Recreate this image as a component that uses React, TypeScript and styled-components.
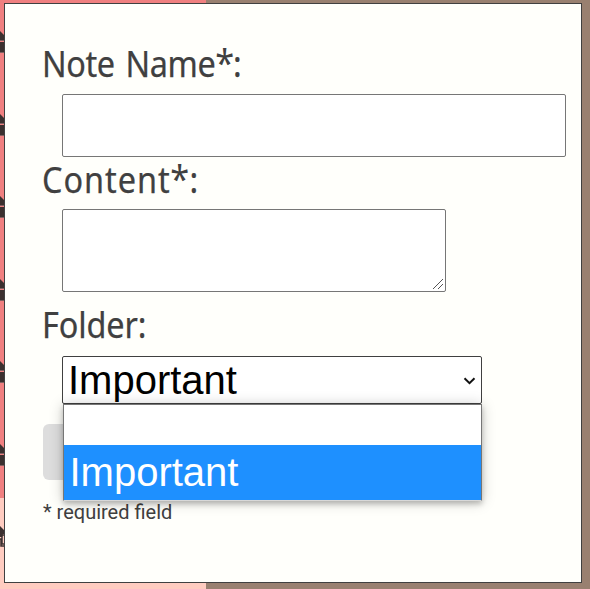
import React from "react";
import styled, { createGlobalStyle } from "styled-components";

const GlobalStyle = createGlobalStyle`
  *, *::before, *::after { box-sizing: border-box; }
  html, body { margin: 0; padding: 0; overflow: hidden; }
`;

const Page = styled.div`
  position: relative;
  display: grid;
  grid-template-columns: 206px 1fr;
  width: 590px;
  height: 589px;
  overflow: hidden;
  background: #998070;
`;

const Sidebar = styled.aside`
  display: grid;
  grid-template-rows: 498px 1fr;
`;

const FolderList = styled.div`
  background: #f08080;
  padding-top: 31px;
`;

const AddFolder = styled.div`
  background: #ffccc0;
  padding-top: 28px;
`;

const IconSlot = styled.div`
  height: 82.6px;
  svg { display: block; }
`;

const Dialog = styled.form`
  position: absolute;
  left: 4px;
  top: 3px;
  width: 578px;
  height: 580px;
  padding: 33px 15px 0 38px;
  border: 1px solid #404040;
  background: #fffffb;
  display: flex;
  flex-direction: column;
  align-items: flex-start;
`;

const Label = styled.label<{ $height: number; $line: number; $tracking: number }>`
  height: ${(p) => p.$height}px;
  margin-left: -1px;
  font-family: "Noto Sans", sans-serif;
  font-size: 36px;
  line-height: ${(p) => p.$line}px;
  letter-spacing: ${(p) => p.$tracking}px;
  word-spacing: 3px;
  white-space: nowrap;
  color: #404040;
  -webkit-text-stroke: 0.25px #404040;
  transform: scaleX(0.9);
  transform-origin: 0 0;
`;

const Star = styled.span`
  display: inline-block;
  line-height: 1;
  -webkit-text-stroke: 0;
  transform: translateY(-1px) scale(1.06);
`;

const NameInput = styled.input`
  width: 504px;
  height: 63px;
  margin: 0 0 0 19px;
  border: 1px solid #767676;
  border-radius: 2px;
  background: #fff;
`;

const ContentWrap = styled.div`
  position: relative;
  width: 384px;
  height: 83px;
  margin: 0 0 10px 19px;
`;

const ContentArea = styled.textarea`
  display: block;
  width: 100%;
  height: 100%;
  border: 1px solid #767676;
  border-radius: 2px;
  background: #fff;
  resize: none;
`;

const Grip = styled.svg`
  position: absolute;
  right: 2px;
  bottom: 2px;
`;

const SelectWrap = styled.div`
  position: relative;
  width: 420px;
  height: 48px;
  margin-left: 19px;
`;

const SelectBox = styled.div`
  display: flex;
  align-items: center;
  justify-content: space-between;
  height: 48px;
  padding: 0 5px;
  border: 1px solid #404040;
  border-radius: 2px;
  background: #fff;
  font: 40px/46px "Liberation Sans", Arial, sans-serif;
  color: #000;
  svg { margin-top: 2px; }
`;

const OptionList = styled.div`
  position: absolute;
  z-index: 1;
  left: 1px;
  top: 48px;
  width: 419px;
  height: 97px;
  border: 1px solid #767676;
  border-bottom-color: #d8d8d8;
  background: #fff;
  box-shadow: 0 1px 13px rgba(0, 0, 0, 0.22), 0 3px 5px rgba(0, 0, 0, 0.2);
`;

const Option = styled.div<{ $selected?: boolean }>`
  height: ${(p) => (p.$selected ? 55 : 40)}px;
  padding-left: 5.5px;
  font: 40px/54px "Liberation Sans", Arial, sans-serif;
  color: #fff;
  background: ${(p) => (p.$selected ? "#1e90ff" : "#fff")};
`;

const SubmitButton = styled.button`
  width: 130px;
  height: 56px;
  margin: 20px 0 0;
  border: 0;
  border-radius: 6px;
  background: #dddddd;
`;

const Footnote = styled.p`
  margin: 20px 0 0;
  font: 20px/24px Roboto, sans-serif;
  white-space: nowrap;
  color: #404040;
`;

const FolderIcon = () => (
  <svg width="5" height="23" viewBox="0 0 5 23">
    <path d="M0 0L5 5V9H0Z" fill="#3b302f" />
    <path d="M0 11H5V21H0Z" fill="#3b302f" />
    <path d="M0 9.5H5M0 21.5H5" stroke="#806060" strokeWidth="1" />
  </svg>
);

const AddFolderIcon = () => (
  <svg width="5" height="23" viewBox="0 0 5 23">
    <path d="M0 0L5 5V8H3L2 11H0Z" fill="#3b302f" />
    <path d="M5 9H2V18H5M0 13H1V20H5" fill="none" stroke="#3b302f" strokeWidth="1.5" />
  </svg>
);

const Chevron = () => (
  <svg width="13" height="8" viewBox="0 0 13 8">
    <path d="M1.5 1.2L6.5 6.1L11.5 1.2" fill="none" stroke="#111" strokeWidth="2" />
  </svg>
);

export default function App() {
  return (
    <>
      <GlobalStyle />
      <Page>
        <Sidebar>
          <FolderList>
            {[0, 1, 2, 3, 4].map((n) => (
              <IconSlot key={n}><FolderIcon /></IconSlot>
            ))}
            <FolderIcon />
          </FolderList>
          <AddFolder><AddFolderIcon /></AddFolder>
        </Sidebar>
        <Dialog>
          <Label htmlFor="name" $height={57} $line={54} $tracking={-0.4}>Note Name<Star>*</Star>:</Label>
          <NameInput id="name" />
          <Label htmlFor="content" $height={52} $line={45} $tracking={1.1}>Content<Star>*</Star>:</Label>
          <ContentWrap>
            <ContentArea id="content" />
            <Grip width="12" height="12" viewBox="0 0 12 12">
              <path d="M1 11L11 1M6 11L11 6" stroke="#555" strokeWidth="1" />
            </Grip>
          </ContentWrap>
          <Label as="span" $height={54} $line={46} $tracking={-0.1}>Folder:</Label>
          <SelectWrap>
            <SelectBox role="combobox" aria-expanded="true">
              Important
              <Chevron />
            </SelectBox>
            <OptionList role="listbox">
              <Option role="option" />
              <Option role="option" aria-selected="true" $selected>Important</Option>
            </OptionList>
          </SelectWrap>
          <SubmitButton type="button" />
          <Footnote>* required field</Footnote>
        </Dialog>
      </Page>
    </>
  );
}
